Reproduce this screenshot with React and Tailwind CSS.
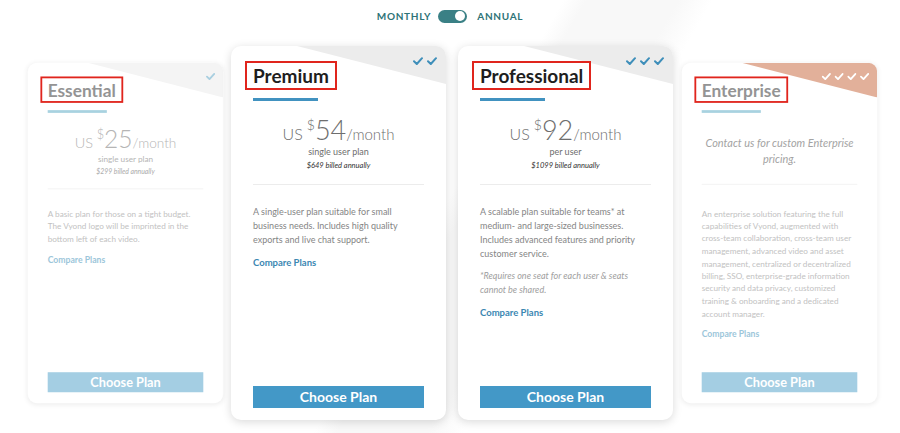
import { Fragment } from "react";

const PLANS = [
  {
    name: "Essential",
    faded: true,
    checks: 1,
    price: "25",
    unit: "single user plan",
    billed: "$299 billed annually",
    desc: [
      ["A basic plan for those on a tight budget.", "The Vyond logo will be imprinted in the", "bottom left of each video."],
    ],
    corner: "#f4f4f4",
    checkColor: "#a9cfe0",
    wrap: "mr-[-2px]",
  },
  {
    name: "Premium",
    checks: 2,
    price: "54",
    unit: "single user plan",
    billed: "$649 billed annually",
    desc: [["A single-user plan suitable for small", "business needs. Includes high quality", "exports and live chat support."]],
    corner: "#ececec",
    checkColor: "#3f8fba",
    wrap: "mr-[12px]",
  },
  {
    name: "Professional",
    checks: 3,
    price: "92",
    unit: "per user",
    billed: "$1099 billed annually",
    desc: [
      ["A scalable plan suitable for teams* at", "medium- and large-sized businesses.", "Includes advanced features and priority", "customer service."],
      ["*Requires one seat for each user & seats", "cannot be shared."],
    ],
    corner: "#ececec",
    checkColor: "#3f8fba",
    wrap: "mr-[-1px] w-[214px]",
  },
  {
    name: "Enterprise",
    faded: true,
    checks: 4,
    contact: ["Contact us for custom Enterprise", "pricing."],
    desc: [
      [
        "An enterprise solution featuring the full",
        "capabilities of Vyond, augmented with",
        "cross-team collaboration, cross-team user",
        "management, advanced video and asset",
        "management, centralized or decentralized",
        "billing, SSO, enterprise-grade information",
        "security and data privacy, customized",
        "training & onboarding and a dedicated",
        "account manager.",
      ],
    ],
    corner: "#e2b09a",
    checkColor: "#ffffff",
    wrap: "",
  },
];

function Check({ color }) {
  return (
    <svg width="10" height="8" viewBox="0 0 10 8" fill="none">
      <path d="M1 4.2 L3.8 7 L9 1.2" stroke={color} strokeWidth="2" strokeLinecap="round" strokeLinejoin="round" />
    </svg>
  );
}

function Card({ plan }) {
  const f = plan.faded;
  return (
    <div
      className={`relative flex h-[374px] w-[215px] shrink-0 flex-col overflow-hidden rounded-[10px] bg-white px-[22px] pb-[12px] ${
        f ? "scale-[0.91] shadow-[0_1px_6px_rgba(0,0,0,0.07)]" : "shadow-[0_2px_10px_rgba(0,0,0,0.15)]"
      } ${plan.wrap}`}
    >
      <svg className="absolute right-0 top-0 h-[38px] w-[149px]" viewBox="0 0 149 38" preserveAspectRatio="none">
        <polygon points="0,0 149,0 149,38" fill={plan.corner} />
      </svg>
      <div className="absolute right-[9px] top-[11px] flex gap-[4px]">
        {Array.from({ length: plan.checks }).map((_, i) => (
          <Check key={i} color={plan.checkColor} />
        ))}
      </div>

      <div className="relative -ml-[8px] mt-[15px] self-start border-2 border-[#e0251d] px-[6px]">
        <h2 className={`text-[19px] font-bold leading-[25px] ${f ? "text-[#949494]" : "text-[#1e1e1e]"}`}>{plan.name}</h2>
      </div>
      <div className={`mt-[8px] h-[3px] w-[65px] ${f ? "bg-[#a8d2e0]" : "bg-[#4192c0]"}`} />

      {plan.contact ? (
        <p className="mt-[26px] text-center text-[12px] italic leading-[16.5px] text-[#a3a3a3]">
          {plan.contact.map((l) => (
            <span key={l} className="block">{l}</span>
          ))}
        </p>
      ) : (
        <div className={`text-center ${f ? "text-[#b5b5b5]" : "text-[#6e6e6e]"}`}>
          <div className="mt-[15px] flex h-[30px] items-baseline justify-center font-light leading-none">
            <span className="text-[16px]">US</span>
            <span className="relative -top-[10px] ml-[4px] text-[14px]">$</span>
            <span className="text-[27px]">{plan.price}</span>
            <span className="text-[15px]">/month</span>
          </div>
          <p className="text-[9px] leading-[12px]">{plan.unit}</p>
          <p className={`mt-[2px] text-[7.5px] italic leading-[12px] ${f ? "text-[#aaa]" : "text-[#333]"}`}>{plan.billed}</p>
        </div>
      )}

      <div className={`h-px ${plan.contact ? "mt-[19px]" : "mt-[12px]"} ${f ? "bg-[#f2f2f2]" : "bg-[#ececec]"}`} />

      <div className={`${plan.contact ? "mt-[25px] leading-[13.7px]" : "mt-[20px] leading-[14px]"} whitespace-nowrap text-[9px]`}>
        {plan.desc.map((para, i) => (
          <p
            key={i}
            className={
              i === 0
                ? f
                  ? "text-[#c2c2c2]"
                  : "text-[#858585]"
                : "mt-[8px] italic text-[#a0a0a0]"
            }
          >
            {para.map((l) => (
              <Fragment key={l}>
                <span className="block">{l}</span>
              </Fragment>
            ))}
          </p>
        ))}
      </div>
      <a className={`mt-[9px] text-[9.5px] font-bold leading-[14px] ${f ? "text-[#9cc6da]" : "text-[#3b87b2]"}`}>Compare Plans</a>

      <button
        className={`mt-auto h-[22px] w-full text-[14px] font-bold leading-[22px] text-white ${f ? "bg-[#a4cee3]" : "bg-[#4398c7]"}`}
      >
        Choose Plan
      </button>
    </div>
  );
}

export default function App() {
  return (
    <div className="flex h-[433px] w-[900px] flex-col overflow-hidden bg-[linear-gradient(120deg,#ffffff_0%,#ffffff_49%,#f8f8f8_51%,#f8f8f8_59%,#ffffff_62%,#ffffff_100%)] font-['Lato',sans-serif]">
      <div className="flex h-[32px] items-center justify-center text-[10px] font-bold tracking-[0.7px] text-[#2e7377]">
        <span>MONTHLY</span>
        <span className="ml-[7px] flex h-[13px] w-[29px] items-center justify-end rounded-full bg-[#3a8085] px-[2px]">
          <span className="h-[10px] w-[10px] rounded-full bg-white" />
        </span>
        <span className="ml-[10px]">ANNUAL</span>
      </div>
      <div className="mt-[14px] flex items-center pl-[18px]">
        {PLANS.map((p) => (
          <Card key={p.name} plan={p} />
        ))}
      </div>
    </div>
  );
}
